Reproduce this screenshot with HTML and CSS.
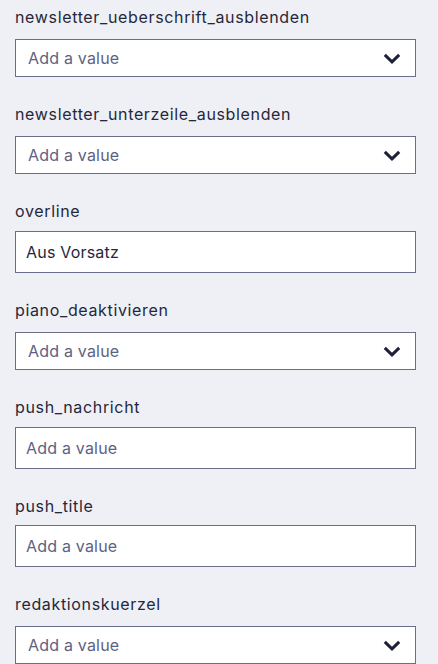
FILE: index.html
```html
<!DOCTYPE html>
<html lang="de">
<head>
<meta charset="utf-8">
<link rel="stylesheet" href="styles.css">
</head>
<body>
<div class="form">
  <div class="field sel">
    <div class="label">newsletter_ueberschrift_ausblenden</div>
    <div class="select"><span class="ph">Add a value</span><svg class="chev" viewBox="0 0 18 11" width="18" height="11"><path d="M1.8 1.8 L9 8.8 L16.2 1.8" fill="none" stroke="#1d2036" stroke-width="3"/></svg></div>
  </div>
  <div class="field sel">
    <div class="label">newsletter_unterzeile_ausblenden</div>
    <div class="select"><span class="ph">Add a value</span><svg class="chev" viewBox="0 0 18 11" width="18" height="11"><path d="M1.8 1.8 L9 8.8 L16.2 1.8" fill="none" stroke="#1d2036" stroke-width="3"/></svg></div>
  </div>
  <div class="field inp">
    <div class="label">overline</div>
    <div class="input"><span class="val">Aus Vorsatz</span></div>
  </div>
  <div class="field sel">
    <div class="label">piano_deaktivieren</div>
    <div class="select"><span class="ph">Add a value</span><svg class="chev" viewBox="0 0 18 11" width="18" height="11"><path d="M1.8 1.8 L9 8.8 L16.2 1.8" fill="none" stroke="#1d2036" stroke-width="3"/></svg></div>
  </div>
  <div class="field inp">
    <div class="label">push_nachricht</div>
    <div class="input"><span class="ph">Add a value</span></div>
  </div>
  <div class="field inp tight">
    <div class="label">push_title</div>
    <div class="input"><span class="ph">Add a value</span></div>
  </div>
  <div class="field sel">
    <div class="label">redaktionskuerzel</div>
    <div class="select"><span class="ph">Add a value</span><svg class="chev" viewBox="0 0 18 11" width="18" height="11"><path d="M1.8 1.8 L9 8.8 L16.2 1.8" fill="none" stroke="#1d2036" stroke-width="3"/></svg></div>
  </div>
</div>
</body>
</html>
```
FILE: styles.css
```css
html, body {
  margin: 0;
  padding: 0;
  background: #eff0f6;
}
body {
  font-family: "Inter", "Noto Sans", sans-serif;
  font-size: 16px;
  color: #25283a;
  overflow: hidden;
  height: 664px;
}
.form {
  display: flex;
  flex-direction: column;
  padding: 7px 22px 0 15px;
}
.field {
  display: flex;
  flex-direction: column;
  margin-bottom: 27px;
}
.label {
  height: 20px;
  line-height: 20px;
  letter-spacing: 0.65px;
}
.field.sel .label { margin-bottom: 12px; }
.field.inp .label { margin-bottom: 10px; }
.field.tight .label { margin-bottom: 9px; }
.select, .input {
  box-sizing: border-box;
  background: #fff;
  border: 1px solid #6a6e8c;
  display: flex;
  align-items: center;
  padding: 0 14px 0 12px;
}
.select { height: 38px; justify-content: space-between; }
.input { height: 42px; padding-left: 10px; }
.ph { color: #5d6282; letter-spacing: 0.2px; }
.val { color: #25283a; letter-spacing: 0.2px; }
.chev { display: block; }
```
